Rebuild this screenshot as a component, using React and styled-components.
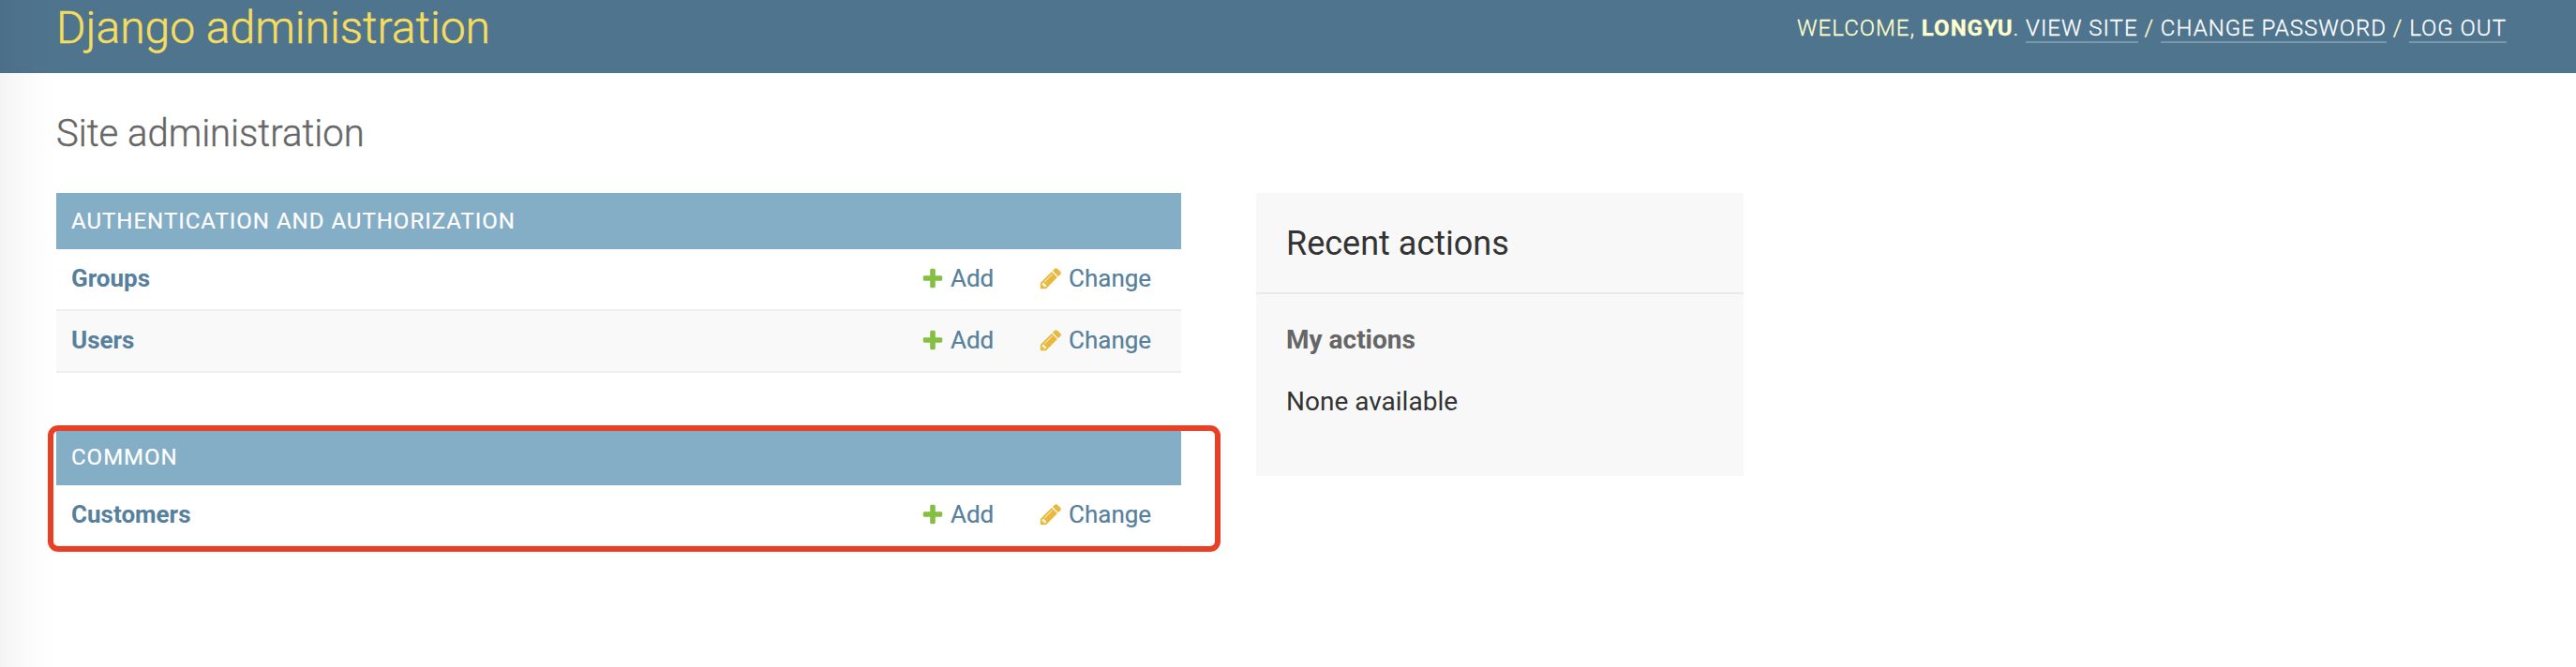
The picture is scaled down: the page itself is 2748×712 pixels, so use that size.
import React from 'react';
import styled, { createGlobalStyle } from 'styled-components';

const GlobalStyle = createGlobalStyle`
  * { box-sizing: border-box; }
  body {
    margin: 0;
    background: #fff;
    color: #333;
    font-family: Roboto, "Liberation Sans", sans-serif;
    font-size: 28px;
  }
  a { text-decoration: none; }
`;

const Page = styled.div`
  position: relative;
  height: 712px;
  overflow: hidden;
`;

const EdgeShade = styled.div`
  position: absolute;
  inset: 0 auto 0 0;
  width: 60px;
  background: linear-gradient(to right, rgba(0, 0, 0, 0.045), rgba(0, 0, 0, 0.016) 50%, rgba(0, 0, 0, 0));
  pointer-events: none;
`;

const Header = styled.header`
  display: flex;
  justify-content: space-between;
  align-items: flex-start;
  height: 78px;
  padding: 0 74px 0 60px;
  background: #4f748e;
`;

const Brand = styled.h1`
  margin: 0;
  padding-top: 1px;
  font-size: 48px;
  font-weight: 300;
  line-height: 58px;
  color: #f5dd5d;
  -webkit-text-stroke: 0.5px currentColor;
`;

const UserTools = styled.div`
  padding-top: 15px;
  font-size: 24px;
  font-weight: 300;
  line-height: 30px;
  letter-spacing: 1px;
  text-transform: uppercase;
  color: #ffc;
  white-space: nowrap;
  -webkit-text-stroke: 0.3px currentColor;

  strong { font-weight: 700; }
`;

const ToolLink = styled.a`
  color: #fff;
  border-bottom: 2px solid rgba(255, 255, 255, 0.25);
`;

const Content = styled.main`
  padding: 41px 60px;
`;

const PageTitle = styled.h2`
  margin: 0 0 39px;
  font-size: 40px;
  font-weight: 300;
  line-height: 48px;
  color: #666;
  -webkit-text-stroke: 0.4px currentColor;
`;

const Columns = styled.div`
  display: flex;
  align-items: flex-start;
  gap: 80px;
`;

const AppList = styled.div`
  display: flex;
  flex-direction: column;
  gap: 60px;
  width: 1200px;
`;

const Module = styled.section`
  position: relative;
`;

const Caption = styled.h3`
  margin: 0;
  height: 60px;
  padding: 0 16px;
  background: #84adc6;
  color: #fff;
  font-size: 24px;
  font-weight: 400;
  line-height: 60px;
  letter-spacing: 1px;
  text-transform: uppercase;
  -webkit-text-stroke: 0.2px currentColor;
`;

const Row = styled.div`
  display: flex;
  height: 66px;
  padding: 0 16px;
  border-bottom: 2px solid #eee;
  background: ${(p) => (p.$alt ? '#f9f9f9' : 'transparent')};
  font-size: 26px;
  line-height: 62px;
`;

const ModelName = styled.a`
  flex: 1;
  font-weight: 700;
  color: #56809c;
`;

const ActionLink = styled.a`
  display: flex;
  gap: 6px;
  width: ${(p) => p.$width}px;
  color: #56809c;
  -webkit-text-stroke: 0.2px currentColor;

  svg { margin-top: 18px; }
`;

const Highlight = styled.div`
  position: absolute;
  top: -4px;
  left: -9.5px;
  width: 1251px;
  height: 135px;
  border: 6px solid #e84025;
  border-radius: 11px;
  pointer-events: none;
`;

const Sidebar = styled.aside`
  width: 520px;
  height: 302px;
  background: #f8f8f8;
`;

const SidebarTitle = styled.h3`
  margin: 0;
  height: 108px;
  padding: 1px 32px 0;
  border-bottom: 2px solid #eaeaea;
  font-size: 36px;
  font-weight: 400;
  line-height: 106px;
`;

const SidebarHeading = styled.h4`
  margin: 32px 32px 0;
  font-size: 28px;
  font-weight: 700;
  line-height: 34px;
  color: #666;
`;

const SidebarText = styled.p`
  margin: 32px 32px 0;
  line-height: 34px;
`;

const PlusIcon = () => (
  <svg width="26" height="26" viewBox="0 0 1792 1792" fill="#84be42">
    <path d="M1600 796v192q0 40-28 68t-68 28h-416v416q0 40-28 68t-68 28h-192q-40 0-68-28t-28-68v-416h-416q-40 0-68-28t-28-68v-192q0-40 28-68t68-28h416v-416q0-40 28-68t68-28h192q40 0 68 28t28 68v416h416q40 0 68 28t28 68z" />
  </svg>
);

const PencilIcon = () => (
  <svg width="26" height="26" viewBox="0 0 1792 1792" fill="#e9b83d">
    <path d="M491 1536l91-91-235-235-91 91v107h128v128h107zm523-928q0-22-22-22-10 0-17 7l-542 542q-7 7-7 17 0 22 22 22 10 0 17-7l542-542q7-7 7-17zm-54-192l416 416-832 832h-416v-416zm683 96q0 53-37 90l-166 166-416-416 166-165q36-38 90-38 53 0 91 38l235 234q37 39 37 91z" />
  </svg>
);

const apps = [
  { name: 'Authentication and Authorization', models: ['Groups', 'Users'] },
  { name: 'Common', models: ['Customers'], highlighted: true },
];

export default function App() {
  return (
    <Page>
      <GlobalStyle />
      <Header>
        <Brand>Django administration</Brand>
        <UserTools>
          Welcome, <strong>longyu</strong>. <ToolLink>View site</ToolLink> /{' '}
          <ToolLink>Change password</ToolLink> / <ToolLink>Log out</ToolLink>
        </UserTools>
      </Header>
      <Content>
        <PageTitle>Site administration</PageTitle>
        <Columns>
          <AppList>
            {apps.map((app) => (
              <Module key={app.name}>
                <Caption>{app.name}</Caption>
                {app.models.map((model, i) => (
                  <Row key={model} $alt={i % 2 === 1}>
                    <ModelName>{model}</ModelName>
                    <ActionLink $width={126}><PlusIcon />Add</ActionLink>
                    <ActionLink $width={136}><PencilIcon />Change</ActionLink>
                  </Row>
                ))}
                {app.highlighted && <Highlight />}
              </Module>
            ))}
          </AppList>
          <Sidebar>
            <SidebarTitle>Recent actions</SidebarTitle>
            <SidebarHeading>My actions</SidebarHeading>
            <SidebarText>None available</SidebarText>
          </Sidebar>
        </Columns>
      </Content>
      <EdgeShade />
    </Page>
  );
}
